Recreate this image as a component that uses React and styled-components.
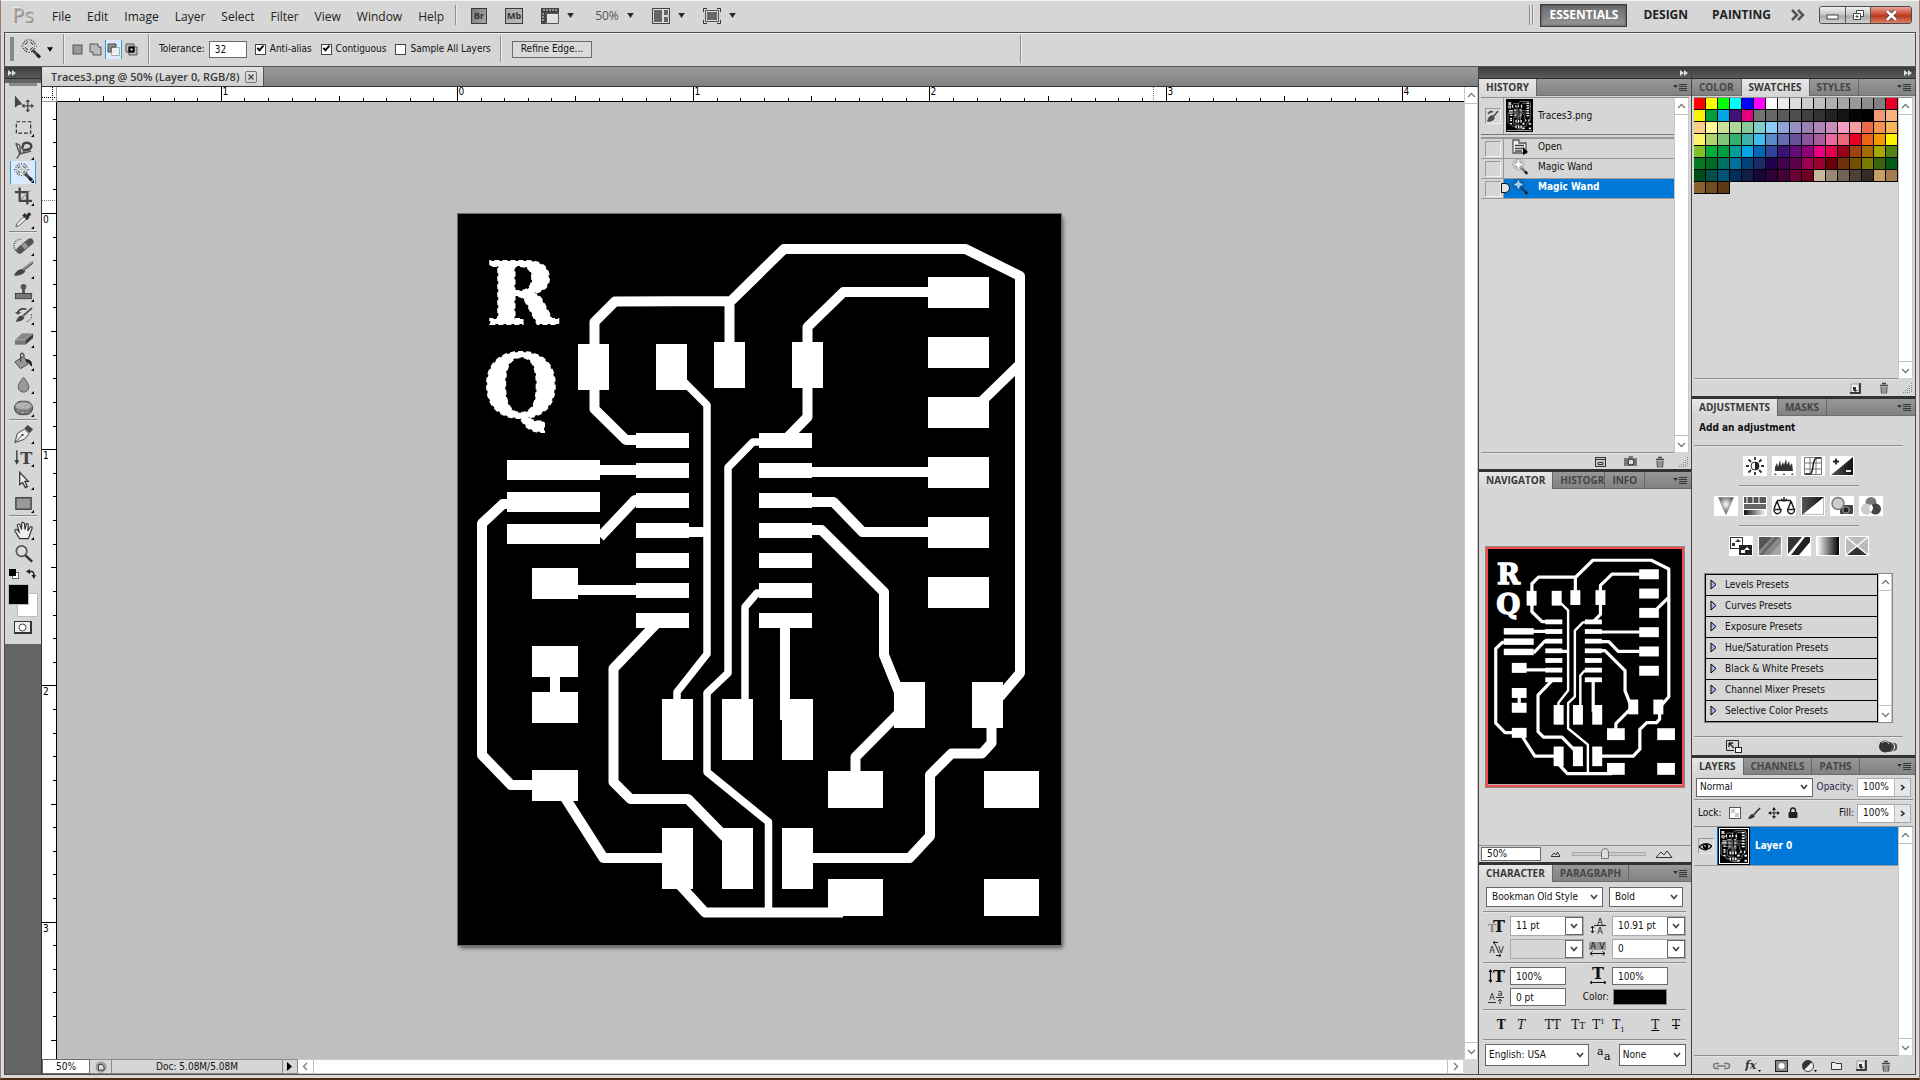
import React, { useEffect, useId, useState } from "react";
import styled, { createGlobalStyle, css } from "styled-components";

const UI = `"DejaVu Sans Condensed", "Open Sans", sans-serif`;
const HEAD = `"Open Sans", "Noto Sans", sans-serif`;
const SERIF = `"DejaVu Serif", "Liberation Serif", serif`;

const Global = createGlobalStyle`
  *, *::before, *::after { box-sizing: border-box; }
  body { margin: 0; background: #4a2a10; }
  button, input, select { font: inherit; color: inherit; margin: 0; padding: 0; border: 0; background: none; border-radius: 0; }
  svg { display: block; flex: none; }
`;

/* ---------- board artwork ---------- */

const ROWS7 = [433, 463, 493, 523, 553, 583, 613];
const PADS = [
  [578, 344, 31, 46], [656, 344, 31, 46], [714, 342, 31, 46], [792, 342, 31, 46],
  ...ROWS7.map((y) => [636, y, 53, 15]),
  ...ROWS7.map((y) => [759, y, 53, 15]),
  [507, 460, 93, 20], [507, 492, 93, 20], [507, 524, 93, 20],
  ...[277, 337, 397, 457, 517, 577].map((y) => [928, y, 61, 31]),
  [532, 568, 46, 31], [532, 646, 46, 31], [532, 692, 46, 31], [532, 770, 46, 31],
  [662, 699, 31, 61], [722, 699, 31, 61], [782, 699, 31, 61],
  [662, 828, 31, 61], [722, 828, 31, 61], [782, 828, 31, 61],
  [894, 682, 31, 46], [972, 682, 31, 46],
  [828, 771, 55, 37], [984, 771, 55, 37], [828, 879, 55, 37], [984, 879, 55, 37],
];
const WIDE = [
  "M594.5 350V322L615 301.500L731 301L784 249H965.500L1020 276V673L992 706",
  "M729.500 300V345", "M594.500 388V409L626 440H640", "M930 292H843.500L807.500 327V417L787 438",
  "M598 470H640", "M510 504H503L482 523.500V755L511 785H535", "M600 537L635 500H640", "M685 532H708",
  "M810 472H930", "M810 502H833.500L862.500 532H930", "M810 530H821.500L884 592V655L899 692",
  "M980 403L1018 366", "M785 620V720", "M656 624L613.500 668.500V782L630.500 799H688L730 842",
  "M576 590H640", "M555 675V694", "M564 796L603.500 858H664", "M679 884L705 912.500H843",
  "M810 858H909.500L930 836V775L951.500 753.500H982L991.500 743V724", "M900 712L855.500 757V775",
];
const NARROW = [
  "M680 378L707 405V654L677 692V703", "M762 442H753L728 467.500V673L707 693V772L768.500 822V910",
  "M762 593H757L745 607V703",
];

function Board({ width, ants, title }) {
  return (
    <svg width={width} viewBox="458 214 603 731" role="img" aria-label={title}>
      <rect x="458" y="214" width="603" height="731" fill="#000" />
      <g fill="#fff">
        {PADS.map(([x, y, w, h], i) => <rect key={i} x={x} y={y} width={w} height={h} />)}
      </g>
      <g fill="none" stroke="#fff" strokeLinejoin="round">
        <path d={WIDE.join("")} strokeWidth="10" />
        <path d={NARROW.join("")} strokeWidth="7.500" />
      </g>
      <g fontFamily={SERIF} fontWeight="700" fontSize="86" fill="#fff" textAnchor="middle"
        stroke="#fff" strokeWidth={ants ? 2 : 4} strokeDasharray={ants ? "5 3" : "none"}>
        <text x="522" y="324">R</text>
        <text x="521" y="416">Q</text>
      </g>
    </svg>
  );
}

/* ---------- icons ---------- */

const Ic = ({ s = 20, w, h, vb, children }) => (
  <svg width={w || s} height={h || s} viewBox={vb || `0 0 ${w || s} ${h || s}`} aria-hidden="true">{children}</svg>
);
const Tri = ({ c = "#2a2a2a", w = 7 }) => <Ic w={w} h={5} vb="0 0 8 6"><path d="M0 0H8L4 6Z" fill={c} /></Ic>;
const Chev = ({ c = "#444" }) => (
  <Ic w={8} h={6}><path d="M1 1L4 4.500L7 1" fill="none" stroke={c} strokeWidth="1.700" /></Ic>
);
const Arrow = ({ dir }) => {
  const d = { up: "M1 6L4.500 2.500L8 6", down: "M1 3L4.500 6.500L8 3", left: "M6 1L2.500 4.500L6 8", right: "M3 1L6.500 4.500L3 8" }[dir];
  return <Ic s={9}><path d={d} fill="none" stroke="#777" strokeWidth="1.300" /></Ic>;
};
const Wand = ({ s = 22, c = "#444", star = "#ccc" }) => (
  <Ic s={s} vb="0 0 22 22">
    <path d="M9 1V15M1 8H17M4 3L14 13M14 3L4 13M6 1.500L12 14.500M12 1.500L6 14.500M2.500 5L15.500 11M15.500 5L2.500 11" stroke={c} strokeWidth="1.100" strokeDasharray="1.500 1" />
    <path d="M9 3L10.500 6.500L14 8L10.500 9.500L9 13L7.500 9.500L4 8L7.500 6.500Z" fill={star} stroke="#fff" strokeWidth=".6" />
    <path d="M12.500 12L19.500 19" stroke={c} strokeWidth="3" /><path d="M17 16.500L20 19.500" stroke="#222" strokeWidth="3" />
  </Ic>
);

const TOOLS = {
  Move: <><path d="M2 1L2 14L5.500 11L10 10.500Z" fill="#444" /><path d="M15.500 7V17M11 12H20" stroke="#444" strokeWidth="1.300" /><path d="M15.500 5L18 8H13ZM15.500 19L13 16H18ZM9 12L12 9.500V14.500ZM22 12L19 9.500V14.500Z" fill="#444" /></>,
  Marquee: <rect x="3.500" y="4.500" width="15" height="12" fill="none" stroke="#333" strokeWidth="1.300" strokeDasharray="4 2" />,
  Lasso: <><path d="M3 3L7 5L8 14L19 11M3 3L7 14L4 19M8 14L13 12" fill="none" stroke="#555" strokeWidth="1.500" /><path d="M9.500 9L11 3.500Q15 1 18.500 4Q20.500 8 16 9.500L10 10.500" fill="none" stroke="#444" strokeWidth="2.600" /></>,
  Wand: null,
  Crop: <><path d="M7 1V15H20M2 6H15V19" fill="none" stroke="#444" strokeWidth="2.400" /><path d="M7 15L18 4" stroke="#666" /></>,
  Eyedropper: <><path d="M3 18L4 15L12 7L14.500 9.500L6.500 17Z" fill="#eee" stroke="#555" /><path d="M11 5L16 10M14 8L18 4" stroke="#333" strokeWidth="3.500" /></>,
  Healing: <><path d="M8 3A6 6 0 1 0 8 17" fill="none" stroke="#222" strokeWidth="1.300" strokeDasharray="1 1.500" /><path d="M7 14.500L18 5.500" stroke="#555" strokeWidth="7" strokeLinecap="round" /><path d="M10.500 11.500L14.500 8.500" stroke="#999" strokeWidth="5.500" /></>,
  Brush: <><path d="M1 17Q4 10 9.500 10L13 12Q11 17 1 17Z" fill="#444" /><path d="M10.500 10.500L21 2.500" stroke="#888" strokeWidth="2.500" /><path d="M11.500 11.500L21 4" stroke="#444" /></>,
  Stamp: <><circle cx="11" cy="4.500" r="3" fill="#555" /><path d="M9.500 6H12.500V12H9.500Z" fill="#555" /><rect x="2.500" y="11.500" width="17" height="5.500" fill="#777" stroke="#444" /></>,
  HistoryBrush: <><path d="M3 17Q5 11 9 10.500L12 12.500Q10 17 3 17Z" fill="#444" /><path d="M10.500 11L20 2.500" stroke="#555" strokeWidth="2" /><path d="M5 7Q8 2 14 4" fill="none" stroke="#333" strokeWidth="1.500" /><path d="M2 7L9 7L5 9.500Z" fill="#333" /><path d="M19 9Q21 15 14 17" fill="none" stroke="#333" strokeDasharray="1.500 1.500" /></>,
  Eraser: <><path d="M2 12L9.500 5H21L13 12Z" fill="#888" /><path d="M2 12H13V17H2Z" fill="#777" /><path d="M13 12L21 5V10L13 17Z" fill="#3c3c3c" /><path d="M2 12H13L21 5" fill="none" stroke="#ccc" strokeWidth=".6" /></>,
  Bucket: <><path d="M2 11L11 5L16 13L8 18Z" fill="#999" stroke="#444" /><path d="M8 11V3Q10 0 12 5" fill="none" stroke="#444" strokeWidth="1.300" /><path d="M13 8Q21 8 20 16L17.500 14Q17 11 14 11Z" fill="#222" /></>,
  Blur: <path d="M11 3Q17 10 16.500 13.500A5.500 5 0 0 1 5.500 13.500Q5 10 11 3Z" fill="#999" stroke="#555" />,
  Sponge: <><rect x="1.500" y="4" width="19" height="14" rx="7" fill="#777" stroke="#444" /><ellipse cx="11" cy="9" rx="9" ry="4.500" fill="#aaa" stroke="#666" strokeDasharray="2 1" /><path d="M6 8H8M11 7H13M9 10H11M14 10H16M5 14H6M9 15.500H11M14 15H15" stroke="#ddd" /></>,
  Pen: <><path d="M2 19L4.500 9.500L12 5L17 9.500L12 15.500Z" fill="#eee" stroke="#444" /><path d="M2 19L10 11" stroke="#444" /><circle cx="10" cy="11" r="1.200" fill="#444" /><path d="M12 4L17.500 9L21 5L15.500 .5Z" fill="#444" /></>,
  Type: <><path d="M4 3V16" stroke="#333" strokeWidth="1.400" /><path d="M1.500 13.500H6.500L4 18Z" fill="#333" /><text x="14" y="17" textAnchor="middle" fontFamily={SERIF} fontWeight="700" fontSize="17" fill="#444">T</text></>,
  PathSelect: <path d="M7 2V15L10 12.500L13 18L15 17L12.500 11.500H16Z" fill="#eee" stroke="#333" strokeWidth="1.300" />,
  Rectangle: <rect x="3" y="4.500" width="16" height="12" fill="#999" stroke="#333" strokeWidth="1.300" />,
  Hand: <path d="M7 19L2 11Q1.500 9 4 9.500L6.500 12L4.500 5Q6 2.500 7.500 5L9 9.500V3Q10 1 12 3L12.500 9.500L14 3.500Q16 2.500 16 5L15.500 11L18 7Q20.500 6 20 8.500L16 19Z" fill="#eee" stroke="#333" strokeWidth="1.200" />,
  Zoom: <><circle cx="9" cy="8" r="5.500" fill="#ddd" stroke="#555" strokeWidth="1.800" /><path d="M13 12.500L20 19" stroke="#333" strokeWidth="2.600" /></>,
};

const MenuGlyph = () => (
  <Ic w={14} h={9}><path d="M0 2H5L2.500 5Z" fill="#333" /><path d="M6 1.500H14M6 3.500H14M6 5.500H14M6 7.500H14" stroke="#333" /></Ic>
);
const Trash = () => (
  <Ic w={10} h={12}><path d="M1 3.500H9M3 1.500H7" stroke="#444" strokeWidth="1.500" /><path d="M2 5L2.500 11H7.500L8 5" fill="none" stroke="#555" strokeWidth="1.200" /><path d="M4 5V10M6 5V10" stroke="#555" /></Ic>
);
const NewIc = () => (
  <Ic w={11} h={11}><path d="M1 1H9V10H1Z" fill="#eee" stroke="#999" /><path d="M10 0V10H0" fill="none" stroke="#111" strokeWidth="1.500" /><path d="M3 4H6V7H8L5 9L3 7Z" fill="#333" /></Ic>
);
const Grip = () => (
  <Ic w={11} h={10}><path d="M9.500 0V10M7.500 3V10M5.500 5V10M3.500 7V10M1.500 9V10" stroke="#888" strokeDasharray="1 1" /></Ic>
);

/* ---------- frame and bars ---------- */

const Shell = styled.div`
  height: 100vh; min-height: 900px; min-width: 1280px;
  display: flex; flex-direction: column;
  border: 1px solid #9b7a66; border-top: 1px solid #f2f2f2; border-bottom: 2px solid #4e2c10;
  background: #dadada; font: 10px/14px ${UI}; color: #111; cursor: default;
`;
const Frame = styled.main`
  flex: 1; min-height: 0; margin: 0 3px 3px; border: 1px solid #4c4c4c;
  display: flex; flex-direction: column; background: #646464;
`;
const MenuBar = styled.header`
  height: 31px; display: flex; align-items: center; padding: 0 7px 3px 10px;
  background: #d6d6d6; font: 12px/18px ${HEAD}; color: #222;
`;
const Logo = styled.span`
  font: 20px/24px ${HEAD}; color: #b2b2b2; text-shadow: 1px 1px 0 #8a8a8a, -1px -1px 0 #e8e8e8; width: 41px; padding-left: 1px;
`;
const MenuList = styled.nav` display: flex; gap: 16px; padding-top: 4px; `;
const FlatButton = styled.button` display: flex; align-items: center; gap: 8px; white-space: nowrap; `;
const ZoomPick = styled(FlatButton)` color: #555; padding-left: 3px; `;
const VRule = styled.i`
  width: 2px; height: ${(p) => p.$h || 20}px; border-left: 1px solid #8e8e8e; border-right: 1px solid #ececec;
  margin: 0 ${(p) => p.$r ?? 10}px 0 ${(p) => p.$l ?? 10}px; flex: none;
`;
const AppIcons = styled.div` display: flex; align-items: center; gap: 18px; padding-top: 1px; `;
const AppBadge = styled.button`
  height: 16px; width: ${(p) => p.$w}px; border: 1px solid #3a3a3a; color: #333; font: 700 9px/14px ${HEAD};
  background: linear-gradient(120deg, ${(p) => p.$from}, ${(p) => p.$to}); text-align: center;
`;
const Workspaces = styled.div` margin-left: auto; display: flex; align-items: center; font-weight: 700; `;
const Workspace = styled.button`
  height: 23px; padding: 0 ${(p) => (p.$on ? 8 : 12)}px;
  ${(p) => p.$on && css`
    border: 1px solid #3c3c3c; color: #fff; background: linear-gradient(#6c6c6c, #979797);
    box-shadow: inset 0 0 3px #444; margin: 0 4px 0 6px;
  `}
`;
const WinButtons = styled.div`
  display: flex; height: 18px; border: 1px solid #4a4a4a; border-radius: 3px; overflow: hidden; margin-left: 6px;
`;
const WinButton = styled.button`
  width: ${(p) => (p.$close ? 41 : 25)}px; display: grid; place-items: center;
  border-left: ${(p) => (p.$first ? 0 : 1)}px solid #555;
  background: ${(p) => (p.$close ? "linear-gradient(#e8a598, #c8432b 50%, #b73820 55%, #dd8063)" : "linear-gradient(#f2f2f2, #c4c4c4 50%, #a9a9a9 55%, #cfcfcf)")};
`;
const OptionsBar = styled.div`
  height: 34px; display: flex; align-items: center; background: #d6d6d6; border-top: 1px solid #eee;
  border-bottom: 1px solid #555; padding: 0 0 2px 5px; flex: none;
`;
const Dots = styled.i`
  ${(p) => (p.$v ? "width: 4px; height: 24px;" : "width: 28px; height: 3px; margin: 4px auto 6px;")}
  flex: none; display: block;
  background: radial-gradient(circle at 1px 1px, #8a8a8a 1px, transparent 1px) 0 0 / 2px 2px;
`;
const ToolPreset = styled.button` display: flex; align-items: center; gap: 5px; margin-left: 6px; `;
const ModeGroup = styled.div` display: flex; align-items: center; gap: 1px; `;
const ModeButton = styled.button`
  width: 17px; height: 19px; display: grid; place-items: center;
  ${(p) => p.$on && "background: #dcebfb; border: solid #2a9fd8; border-width: 0 1px;"}
`;
const Label = styled.label` display: flex; align-items: center; gap: ${(p) => p.$gap || 4}px; white-space: nowrap; color: ${(p) => p.$c || "#111"}; `;
const Field = styled.input`
  width: ${(p) => p.$w}px; height: ${(p) => p.$h || 16}px; background: #fff; border: 1px solid ${(p) => p.$b || "#6c6c6c"};
  padding-left: ${(p) => p.$pad || 5}px; min-width: 0;
`;
const Check = styled.input.attrs({ type: "checkbox" })`
  appearance: none; width: 11px; height: 11px; background: #fff; border: 1px solid #444; display: grid; place-items: center;
  &:checked::before { content: ""; width: 7px; height: 4px; border: solid #111; border-width: 0 0 2px 2px; transform: rotate(-48deg) translate(1px, -1px); }
`;
const Checks = styled.div` display: flex; gap: 9px; margin-left: 8px; `;
const PushButton = styled.button` height: 17px; padding: 0 8px; border: 1px solid #6c6c6c; background: #dadada; `;

const Work = styled.div` flex: 1; min-height: 0; display: flex; `;
const DarkHead = styled.div`
  height: 12px; background: linear-gradient(#3c3c3c, #5a5a5a); border-bottom: 1px solid #2c2c2c; flex: none;
  display: flex; align-items: center; justify-content: ${(p) => (p.$left ? "flex-start" : "flex-end")}; padding: 0 3px;
`;
const Fast = () => <Ic w={8} h={6}><path d="M0 0L4 3L0 6ZM4 0L8 3L4 6Z" fill="#ddd" /></Ic>;

/* ---------- tool dock ---------- */

const ToolDock = styled.aside` width: 37px; flex: none; border-right: 1px solid #333; background: #646464; `;
const ToolBox = styled.div` background: #d6d6d6; padding-bottom: 10px; `;
const Tool = styled.button`
  width: 26px; height: 23px; margin: 0 5px; display: grid; place-items: center; position: relative;
  border: solid transparent; border-width: 0 1px;
  ${(p) => p.$on && "background: #dcebfb; border-color: #2a9fd8;"}
  ${(p) => p.$more && `&::after { content: ""; position: absolute; right: 1px; bottom: 1px; border: solid #000; border-width: 0 0 3px 3px; border-left-color: transparent; }`}
`;
const ToolRule = styled.hr` height: 2px; margin: 1px 4px; border: solid; border-width: 1px 0; border-color: #888 transparent #e8e8e8; `;
const MiniRow = styled.div` display: flex; justify-content: space-between; padding: 5px 5px 0 4px; height: 20px; `;
const Inks = styled.div` display: grid; grid-template-columns: repeat(10, 3px); grid-template-rows: repeat(11, 3px); margin: 0 3px 3px; `;
const Ink = styled.button`
  grid-area: ${(p) => (p.$back ? "4 / 4 / 12 / 11" : "1 / 1 / 8 / 8")}; z-index: ${(p) => (p.$back ? 0 : 1)};
  background: ${(p) => (p.$back ? "#fff" : "#000")}; border: 1px solid #fff; outline: 1px solid #bbb; outline-offset: -1px;
`;
const MaskButton = styled.button`
  display: grid; place-items: center; width: 18px; height: 13px; margin: 4px auto 0 9px; background: #eee; border: solid #333; border-width: 1px 2px 2px 1px;
`;

const NO_MORE = ["Move", "Zoom"];
function ToolGroup({ names }) {
  return names.map((n) => (
    <Tool key={n} $on={n === "Wand"} $more={!NO_MORE.includes(n)} aria-label={n}>
      {n === "Wand" ? <Wand s={21} /> : <Ic w={21} h={20} vb="0 0 22 20">{TOOLS[n]}</Ic>}
    </Tool>
  ));
}

/* ---------- document ---------- */

const Doc = styled.section`
  flex: 1; min-width: 0; display: grid;
  grid-template: 20px 15px minmax(0, 1fr) 15px / 15px minmax(0, 1fr) 14px;
`;
const DocTabs = styled.div`
  grid-column: 1 / -1; display: flex; background: linear-gradient(#9b9b9b, #808080); border-bottom: 1px solid #333;
`;
const DocTab = styled.div`
  display: flex; align-items: center; gap: 6px; padding: 0 6px 0 9px; background: linear-gradient(#e2e2e2, #cfcfcf);
  border-right: 1px solid #555; font: 600 11px/18px ${HEAD}; color: #3a3a3a; white-space: nowrap;
`;
const CloseTab = styled.button` width: 12px; height: 12px; display: grid; place-items: center; border: 1px solid #777; border-radius: 2px; `;
const RulerX = styled.div` background: #fff; overflow: hidden; border-bottom: 1px solid #000; `;
const RulerY = styled.div` background: #fff; overflow: hidden; border-right: 1px solid #000; `;
const Corner = styled.div` background: #fff; border-right: 1px solid #999; border-bottom: 1px solid #999; `;
const Pasteboard = styled.div`
  background: #bfbfbf; display: flex; align-items: center; justify-content: center; overflow: hidden; padding: 0 2px 2px 0;
`;
const Artboard = styled.div` box-shadow: 0 0 0 1px #6e6e6e, 2px 3px 4px #555; `;
const Scroll = styled.div`
  display: flex; flex-direction: ${(p) => (p.$x ? "row" : "column")}; justify-content: space-between;
  background: #fff; flex: ${(p) => (p.$x ? 1 : "none")}; ${(p) => !p.$x && `width: ${p.$w || 14}px;`}
  ${(p) => p.$span && "grid-row: 2 / 4; grid-column: 3;"}
  border: solid #c8c8c8; border-width: ${(p) => (p.$x ? "1px 0" : "0 1px")};
`;
const ScrollBtn = styled.button`
  ${(p) => (p.$x ? "width: 16px;" : "height: 17px;")} display: grid; place-items: center; flex: none;
  border: 0 solid #c0c0c0; border-${(p) => p.$edge}-width: 1px;
`;
const Status = styled.footer` grid-column: 1 / -1; display: flex; background: #d6d6d6; `;
const StatusCell = styled.div`
  width: ${(p) => p.$w}px; display: flex; align-items: center; justify-content: center;
  border: solid #8a8a8a; border-width: 1px 1px 1px 0; white-space: nowrap; flex: none;
`;
const StatusGap = styled.div` width: 15px; `;

function ScrollV({ span, w }) {
  return (
    <Scroll $span={span} $w={w}>
      <ScrollBtn $edge="bottom" aria-label="Scroll up"><Arrow dir="up" /></ScrollBtn>
      <ScrollBtn $edge="top" aria-label="Scroll down"><Arrow dir="down" /></ScrollBtn>
    </Scroll>
  );
}

const INCH = 236.2;
const CHROME_X = 514;
const CHROME_Y = 124;

function useViewport() {
  const read = () => [window.innerWidth, window.innerHeight];
  const [size, setSize] = useState(read);
  useEffect(() => {
    const on = () => setSize(read());
    window.addEventListener("resize", on);
    return () => window.removeEventListener("resize", on);
  }, []);
  return size;
}

function ticks(origin, length) {
  const out = [];
  for (let k = -Math.floor((origin * 10) / INCH); ; k++) {
    const at = Math.round(origin + (k * INCH) / 10) - 0.5;
    if (at > length) return out;
    out.push({ k, at, big: k % 10 === 0, from: k % 10 === 0 ? 0 : k % 5 === 0 ? 9 : 11 });
  }
}
function HRuler({ length }) {
  return (
    <Ic w={length} h={14}>
      {ticks(401, length).map(({ k, at, big, from }) => (
        <g key={k}>
          <path d={`M${at} ${from}V14`} stroke="#000" />
          {big && <text x={at + 1} y="8" fontSize="10">{Math.abs(k / 10)}</text>}
        </g>
      ))}
      <path d="M1096.500 0V14" stroke="#777" strokeDasharray="1 1" />
    </Ic>
  );
}
function VRuler({ length }) {
  return (
    <Ic w={14} h={length}>
      {ticks(112, length).map(({ k, at, big, from }) => (
        <g key={k}>
          <path d={`M${from} ${at}H14`} stroke="#000" />
          {big && <text x="1" y={at + 9} fontSize="10">{Math.abs(k / 10)}</text>}
        </g>
      ))}
      <path d="M0 98.500H14" stroke="#777" strokeDasharray="1 1" />
    </Ic>
  );
}

/* ---------- panels ---------- */

const Dock = styled.aside`
  width: ${(p) => p.$w}px; flex: none; border-left: 1px solid #444; display: flex; flex-direction: column;
`;
const PanelBox = styled.section`
  flex: ${(p) => p.$flex || "none"}; min-height: 0; display: flex; flex-direction: column; background: #d6d6d6;
  border-bottom: ${(p) => (p.$last ? 0 : 3)}px solid #323232; overflow: hidden;
`;
const Tabs = styled.div`
  height: 17px; flex: none; display: flex; background: linear-gradient(#989898, #828282);
  font: 700 10px/15px ${HEAD}; border-bottom: 1px solid #6e6e6e;
`;
const TabBtn = styled.button`
  padding: 0 ${(p) => (p.$tight ? 0 : 7)}px 1px 7px; height: 17px; border-right: 1px solid #666; color: ${(p) => (p.$on ? "#383838" : "#454545")};
  ${(p) => p.$on && "background: linear-gradient(#e6e6e6, #d6d6d6);"}
  white-space: nowrap;
`;
const PanelMenu = styled.button` margin-left: auto; padding: 0 4px; `;
function Panel({ tabs, on, tight, flex, last, children }) {
  return (
    <PanelBox $flex={flex} $last={last}>
      <Tabs>
        {tabs.map((t) => <TabBtn key={t} $on={t === on} $tight={t === tight}>{t}</TabBtn>)}
        <PanelMenu aria-label="Panel menu"><MenuGlyph /></PanelMenu>
      </Tabs>
      {children}
    </PanelBox>
  );
}
const Line = styled.hr`
  height: 2px; border: solid; border-width: 1px 0; border-color: #8e8e8e transparent #e4e4e4; flex: none;
  margin: ${(p) => p.$m || "0"}; ${(p) => p.$w && `width: ${p.$w}px;`}
`;
const Body = styled.div` flex: 1; min-height: 0; display: flex; margin: 1px 2px 0; border-top: 1px solid #8e8e8e; `;
const Col = styled.div` flex: 1; min-width: 0; display: flex; flex-direction: column; `;
const Foot = styled.div`
  height: ${(p) => p.$h || 17}px; flex: none; display: flex; align-items: center; justify-content: flex-end; gap: ${(p) => p.$gap}px;
  padding-right: ${(p) => p.$r ?? 0}px;
`;
const IconSet = styled.div` display: flex; align-items: center; gap: 18px; `;

const HistoryRow = styled.div`
  height: ${(p) => (p.$tall ? 37 : 20)}px; display: flex; flex: none; border-bottom: 1px solid ${(p) => (p.$tall ? "#777" : "#999")};
  margin-bottom: ${(p) => (p.$tall ? 4 : 0)}px; box-shadow: ${(p) => (p.$tall ? "0 2px 0 #d6d6d6, 0 4px 0 #999" : "none")};
`;
const Well = styled.span`
  width: 23px; padding-left: 4px; border-right: 1px solid #999; display: flex; align-items: center; flex: none;
`;
const WellBox = styled.span`
  width: 16px; height: 16px; border: 1px solid; border-color: #999 #eee #eee #999; display: grid; place-items: center;
`;
const State = styled.button`
  flex: 1; display: flex; align-items: center; gap: ${(p) => (p.$tall ? 4 : 9)}px; padding: 0 0 ${(p) => (p.$tall ? "1px 1px" : "3px 7px")}; position: relative;
  ${(p) => p.$on && "background: #0078d7; color: #fff; font-weight: 700;"}
`;
const Pointer = styled.i`
  position: absolute; left: -3px; top: 4px; width: 9px; height: 10px; background: #e6e6e6; border: 1px solid #111; border-radius: 1px 6px 6px 1px;
`;

const Swatches = styled.div` display: grid; grid-template-columns: repeat(17, 12px); grid-auto-rows: 12px; `;
const Swatch = styled.button` background: ${(p) => p.$c}; border: solid #000; border-width: 0 1px 1px 0; `;

const NavView = styled.div` flex: 1; display: grid; place-items: center; min-height: 0; `;
const NavFrame = styled.div` border: 2px solid #f8494b; outline: 1px solid #888; `;
const NavFoot = styled.div` display: flex; align-items: center; padding: 0 17px 0 2px; gap: 10px; height: 17px; flex: none; border-top: 1px solid #8e8e8e; `;
const Range = styled.input.attrs({ type: "range" })`
  appearance: none; width: 74px; height: 12px; margin-left: 2px;
  &::-webkit-slider-runnable-track { height: 4px; border: 1px solid #aaa; background: #ccc; }
  &::-webkit-slider-thumb { appearance: none; width: 8px; height: 11px; margin-top: -5px; background: #ddd; border: 1px solid #777; border-radius: 4px 4px 0 0; }
`;

const SelectBox = styled.span`
  display: inline-grid; width: ${(p) => p.$w}px; height: ${(p) => p.$h || 20}px; background: #fff; border: 1px solid #666; align-items: center;
  > select { grid-area: 1 / 1; appearance: none; width: 100%; height: 100%; padding-left: ${(p) => p.$pad || 5}px; outline: none; }
  > svg { grid-area: 1 / 1; justify-self: end; margin-right: 4px; pointer-events: none; }
`;
const Pick = ({ w, h, pad, label, value }) => (
  <SelectBox $w={w} $h={h} $pad={pad}><select aria-label={label} defaultValue={value}><option>{value}</option></select><Chev /></SelectBox>
);
const ComboBox = styled.span`
  display: flex; width: ${(p) => p.$w}px; height: ${(p) => p.$h || 20}px; border: 1px solid #a8a8b0; background: ${(p) => (p.$off ? "#d6d6d6" : "#fff")};
  > input { flex: 1; min-width: 0; padding-left: 5px; }
  > button { width: ${(p) => (p.$thin ? 16 : 18)}px; display: grid; place-items: center; background: ${(p) => (p.$thin ? "#e6e6e6" : "#fff")};
    border: 1px solid ${(p) => (p.$thin ? "#bbb" : "#666")}; border-width: ${(p) => (p.$thin ? "0 0 0 1px" : "1px")}; }
`;
const Combo = ({ w, off, value, label }) => (
  <ComboBox $w={w} $off={off}><input aria-label={label} defaultValue={value} /><button aria-label={`${label} list`}><Chev /></button></ComboBox>
);
const Stepper = ({ id, value }) => (
  <ComboBox $w={54} $h={19} $thin><input id={id} defaultValue={value} /><button aria-label="Open slider"><Ic w={6} h={7}><path d="M1 1L4 3.500L1 6" fill="none" stroke="#222" strokeWidth="1.500" /></Ic></button></ComboBox>
);

const CharBody = styled.div` padding: 5px 5px 8px 4px; display: flex; flex-direction: column; flex: 1; `;
const CharRow = styled.div` display: flex; gap: ${(p) => p.$gap || 6}px; padding-left: ${(p) => p.$l ?? 3}px; align-items: center; height: ${(p) => p.$h || 20}px; `;
const CharGrid = styled.div`
  display: grid; grid-template-columns: 27px 74px 28px 74px; row-gap: 3px; align-items: center;
  > svg { justify-self: center; }
`;
const InkChip = styled.button` width: 54px; height: 16px; background: #000; border: 1px solid #888; margin-left: 1px; `;
const ColorLabel = styled.span` justify-self: end; white-space: nowrap; padding-right: 3px; `;
const StyleRow = styled.div` display: flex; align-items: center; height: 28px; padding-left: 8px; font: 12px/18px ${SERIF}; `;
const StyleBtn = styled.button`
  width: ${(p) => p.$w || 21}px; text-align: center; ${(p) => p.$s}
  > small { font-size: 9px; } > sup, > sub { font-size: 7px; line-height: 0; }
`;

const AdjTitle = styled.h2` font: 700 10px/14px ${UI}; margin: 5px 0 10px 5px; `;
const AdjLine = styled.div` display: flex; justify-content: center; gap: 5px; padding-top: 9px; `;
const AdjButton = styled.button` width: 24px; height: 20px; background: #fff; display: grid; place-items: center; `;
const AdjWrap = styled.div` display: flex; flex-direction: column; padding: 0 12px 0 2px; `;
const Presets = styled.div` display: flex; margin: 17px 0 13px 10px; width: 189px; border: 1px solid #888; `;
const PresetList = styled.ul` list-style: none; margin: 0; padding: 0; flex: 1; border: solid #000; border-width: 1px 1px 0; `;
const Preset = styled.li` height: 21px; border-bottom: 1px solid #000; display: flex; align-items: center; gap: 8px; padding-left: 4px; `;
const AdjFoot = styled.div` display: flex; justify-content: space-between; align-items: center; height: 17px; padding: 0 4px 0 32px; `;

const LayerOpts = styled.div` display: flex; align-items: center; justify-content: space-between; height: ${(p) => p.$h}px; padding: 0 4px; `;
const LockSet = styled.div` display: flex; align-items: center; gap: 7px; padding-left: 2px; `;
const LayerRow = styled.div` height: 39px; display: flex; border-bottom: 1px solid #999; `;
const EyeCell = styled.div` width: 23px; display: grid; place-items: center; `;
const LayerName = styled.button`
  flex: 1; display: flex; align-items: center; gap: 5px; background: #0078d7; color: #fff; font-weight: 700; padding-left: 1px;
`;
const Thumb = styled.span` border: 1px solid ${(p) => (p.$sel ? "#fff" : "#000")}; outline: ${(p) => (p.$sel ? "1px solid #000" : "none")}; margin: 1px; `;

const SW = `ff0000 ffff00 00ff00 00ffff 0000ff ff00ff ffffff ebebeb dcdcdc cdcdcd bebebe b0b0b0 a6a6a6 999999 8c8c8c 808080 e60026
f9f200 009e3d 00a5ea 3f1179 e4007f 737373 666666 595959 4d4d4d 404040 333333 222222 141414 050505 000000 f29b76 f6b37f
facd89 fff799 cce198 acd598 89c997 84ccc9 8bcdf4 8fa6d5 9690c5 9b80b8 af86b8 c78fb9 f49ec1 f49e9e eb6a48 f19450 f8b756
fff467 acd56a 80c77a 32b16c 3cb4ae 3fbbef 5a8ac6 656cb0 674f9b 8a559c ab5b9c ea689f eb6876 e60026 ea6519 f29a00 fcf300
7fc126 00ae3c 009e40 009f9b 00a5ea 0068b6 30439a 3c127a 650b78 910078 e4007f e4004f 99001a a0410f a56b00 a9a700 508414
007a1f 006b24 006f62 0070a0 00427a 1c2a66 220050 440050 5c004c 9c004e 99002e 6a0006 722e0a 755000 7b7b00 3a6410 005a18
004d1a 004f48 005276 003059 111e46 18053a 2c0038 430037 6e0038 6e0022 c9b79c 998875 736357 4f4039 362a28 c69f65 a67b4d
8b6131 734d22 5c3817`.split(/\s+/);

const Grad = ({ id, from, to }) => (
  <linearGradient id={id}><stop offset="0" stopColor={from} /><stop offset="1" stopColor={to} /></linearGradient>
);
const ADJ = [
  [
    ["Brightness", <><path d="M12 1V4M12 16V19M3 10H6M18 10H21M5.500 3.500L8 6M16 14L18.500 16.500M18.500 3.500L16 6M5.500 16.500L8 14" stroke="#333" strokeWidth="1.800" /><circle cx="12" cy="10" r="4" fill="#fff" stroke="#333" /><path d="M12 6A4 4 0 0 1 12 14Z" fill="#222" /></>],
    ["Levels", <><path d="M3 15V11L5 7L6 11L8 4L9 10L11 6L12 9L14 3L15 9L17 5L18 10L20 7L21 15Z" fill="#333" /><path d="M3 17L5 19H2ZM12 17L13.500 19H10.500ZM20 17L22 19H19Z" fill="#555" /></>],
    ["Curves", <><path d="M3.500 1.500H20.500V18.500H3.500ZM3.500 7H20.500M3.500 13H20.500M9 1.500V18.500M15 1.500V18.500" fill="none" stroke="#777" /><path d="M4 18H9Q11 18 12 10Q13 2 16 2H20" fill="none" stroke="#222" strokeWidth="1.600" /></>],
    ["Exposure", <><path d="M1 19L23 1V19Z" fill="url(#gDark)" /><path d="M3 5.500H9M6 2.500V8.500" stroke="#222" strokeWidth="1.800" /><path d="M16 15H21" stroke="#fff" strokeWidth="1.800" /></>],
  ],
  [
    ["Vibrance", <path d="M4.500 1.500H19.500L12 18.500Z" fill="url(#gMid)" stroke="#888" strokeWidth=".7" />],
    ["Hue", <><rect x="1" y="1" width="22" height="6" fill="#555" /><path d="M4 1V7M10 1V7M16 1V7" stroke="#aaa" strokeWidth="2" /><rect x="1" y="8" width="22" height="5" fill="#666" /><rect x="1" y="14" width="22" height="5" fill="url(#gBW)" /></>],
    ["Balance", <path d="M12 1V4M5 4.500H19M9 3L12 5L15 3M5 5L2 13M5 5L8 13M19 5L16 13M19 5L22 13M1.500 13.500H9A3.500 4 0 0 1 2 14M15 13.500H22.500A3.500 4 0 0 1 15.500 14" fill="none" stroke="#222" strokeWidth="1.500" />],
    ["Black and White", <><rect x="1.500" y="1.500" width="21" height="17" fill="#fff" stroke="#bbb" /><path d="M1 19V1H23Z" fill="url(#gDark)" /></>],
    ["Photo Filter", <><rect x="10" y="9" width="13" height="9" rx="1" fill="#444" /><circle cx="16" cy="14" r="3.200" fill="#222" stroke="#aaa" /><circle cx="8" cy="7.500" r="6" fill="#ccc" stroke="#777" strokeWidth="1.500" /></>],
    ["Channel Mixer", <><circle cx="12" cy="6.500" r="5.500" fill="#777" /><circle cx="16.500" cy="13" r="5.500" fill="#444" /><circle cx="7.500" cy="13" r="5.500" fill="#ccc" /><path d="M12 8Q16 12 12 16Q9 12 12 8Z" fill="#fff" /></>],
  ],
  [
    ["Invert", <><rect x="1.500" y="1.500" width="12" height="11" fill="#fff" stroke="#333" /><path d="M3 7H6V10H3ZM9 3L12 6H6Z" fill="#333" /><rect x="10" y="9" width="13" height="10" fill="#222" /><path d="M12 14H16V17H12ZM18 11L21 14H15Z" fill="#fff" /></>],
    ["Posterize", <><rect x="1" y="1" width="22" height="18" fill="#888" /><path d="M1 1H14L1 15Z" fill="#555" /><path d="M1 19L17 1H21L5 19Z" fill="#666" /><path d="M12 19L23 7V19Z" fill="#a5a5a5" /></>],
    ["Threshold", <><path d="M1 1H15L1 18Z" fill="#333" /><path d="M4 19L18 1H23V6L12 19Z" fill="#222" /></>],
    ["Gradient Map", <rect x="1" y="1" width="22" height="18" fill="url(#gWB)" />],
    ["Selective Color", <><rect x="1" y="1" width="22" height="18" fill="#bbb" /><path d="M1 19L12 10L23 19Z" fill="#333" /><path d="M1 1L23 19M23 1L1 19" stroke="#fff" strokeWidth="1.500" /></>],
  ],
];
const PRESETS = ["Levels", "Curves", "Exposure", "Hue/Saturation", "Black & White", "Channel Mixer", "Selective Color"];

const TIcon = ({ kind }) => {
  const t = (x, y, s, c, ch, b) => <text x={x} y={y} fontSize={s} fill={c} fontFamily={b ? SERIF : UI} fontWeight={b ? 700 : 400} textAnchor="middle">{ch}</text>;
  const m = {
    size: <>{t(4, 15, 11, "#888", "T", 1)}{t(11, 15, 16, "#111", "T", 1)}</>,
    lead: <>{t(11, 8, 9, "#111", "A")}{t(11, 17, 9, "#111", "A")}<path d="M5 8.500H17M3.500 9V16M2 11L3.500 9L5 11M2 14L3.500 16L5 14" fill="none" stroke="#222" /></>,
    kern: <>{t(4, 13, 9, "#222", "A")}{t(13, 13, 9, "#222", "V")}<path d="M7 4L11 13M5 2.500H10M7 1L5 2.500L7 4M8 15.500H13M11 14L13 15.500L11 17" fill="none" stroke="#222" /></>,
    track: <><rect x="0" y="2" width="17" height="8" fill="#999" />{t(4, 9, 9, "#111", "A")}{t(13, 9, 9, "#111", "V")}<path d="M1 13.500H16M3.500 11.500L1 13.500L3.500 15.500M13.500 11.500L16 13.500L13.500 15.500" fill="none" stroke="#111" /></>,
    vs: <>{t(11, 15, 16, "#111", "T", 1)}<path d="M2.500 3V15M1 5L2.500 3L4 5M1 13L2.500 15L4 13" fill="none" stroke="#111" strokeWidth="1.200" /></>,
    hs: <>{t(9, 12, 16, "#111", "T", 1)}<path d="M1 15.500H17M3 14L1 15.500L3 17M15 14L17 15.500L15 17" fill="none" stroke="#111" /></>,
    base: <>{t(4, 12, 9, "#222", "A")}{t(12, 8, 9, "#222", "a")}<path d="M0 14.500H8M8 9.500H16M12 16V11M10 13L12 11L14 13" fill="none" stroke="#333" /></>,
  };
  return <Ic w={18} h={18}>{m[kind]}</Ic>;
};

export default function App() {
  const uid = useId();
  const [vw, vh] = useViewport();
  const menus = ["File", "Edit", "Image", "Layer", "Select", "Filter", "View", "Window", "Help"];
  return (
    <>
      <Global />
      <Shell>
        <MenuBar>
          <Logo>Ps</Logo>
          <MenuList>{menus.map((m) => <FlatButton key={m}>{m}</FlatButton>)}</MenuList>
          <VRule $l={11} $r={14} />
          <AppIcons>
            <AppBadge $w={16} $from="#777" $to="#aaa">Br</AppBadge>
            <AppBadge $w={18} $from="#aaa" $to="#bbb">Mb</AppBadge>
            <FlatButton aria-label="View extras"><Ic w={18} h={16}><path d="M0 0H18V5H5V16H0Z" fill="#444" /><path d="M5.500 5.500H17.500V15.500H5.500Z" fill="#e2e2e2" stroke="#555" /><path d="M3 1V3M6 1V3M9 1V3M12 1V3M15 1V3M1 6H3M1 9H3M1 12H3" stroke="#ddd" /></Ic><Tri /></FlatButton>
            <ZoomPick>50%<Tri /></ZoomPick>
            <FlatButton aria-label="Arrange documents"><Ic w={18} h={16}><rect x=".5" y=".5" width="17" height="15" fill="#ddd" stroke="#444" /><path d="M2 2H10V14H2ZM12 2H16V7H12ZM12 9H16V14H12Z" fill="#666" /></Ic><Tri /></FlatButton>
            <FlatButton aria-label="Screen mode"><Ic w={18} h={16}><path d="M.5 4V.5H4M14 .5H17.500V4M17.500 12V15.500H14M4 15.500H.5V12" fill="none" stroke="#333" /><rect x="2.500" y="2.500" width="13" height="11" fill="#ddd" stroke="#555" /><rect x="4" y="4" width="10" height="8" fill="#666" /></Ic><Tri /></FlatButton>
          </AppIcons>
          <Workspaces>
            <VRule $l={0} $r={0} /><VRule $l={1} $r={0} />
            <Workspace $on>ESSENTIALS</Workspace>
            <Workspace>DESIGN</Workspace>
            <Workspace>PAINTING</Workspace>
            <FlatButton aria-label="More workspaces"><Ic w={30} h={12}><path d="M9 1L14 6L9 11M15 1L20 6L15 11" fill="none" stroke="#555" strokeWidth="2.500" /></Ic></FlatButton>
            <WinButtons>
              <WinButton $first aria-label="Minimize"><Ic w={13} h={12}><rect x="1" y="6" width="11" height="4" fill="#fff" stroke="#444" /></Ic></WinButton>
              <WinButton aria-label="Restore"><Ic w={13} h={12}><path d="M4.500 1.500H11.500V7.500H4.500Z" fill="#fff" stroke="#444" /><path d="M1.500 4.500H8.500V10.500H1.500Z" fill="#fff" stroke="#444" /><path d="M4 7H6V8H4Z" fill="#888" stroke="#444" /></Ic></WinButton>
              <WinButton $close aria-label="Close"><Ic w={13} h={11}><path d="M2 1L11 10M11 1L2 10" stroke="#533" strokeWidth="4.500" /><path d="M2 1L11 10M11 1L2 10" stroke="#fff" strokeWidth="2.800" /></Ic></WinButton>
            </WinButtons>
          </Workspaces>
        </MenuBar>

        <Frame>
          <OptionsBar>
            <Dots $v />
            <ToolPreset aria-label="Tool presets"><Wand s={22} /><Tri c="#000" w={6} /></ToolPreset>
            <VRule $h={30} $l={10} $r={4} />
            <ModeGroup>
              <ModeButton aria-label="New selection"><Ic s={11}><rect x="1" y="1" width="9" height="9" fill="#999" stroke="#555" /></Ic></ModeButton>
              <ModeButton aria-label="Add to selection"><Ic s={13}><path d="M1 1H9V4H12V12H4V9H1Z" fill="#bbb" stroke="#555" /></Ic></ModeButton>
              <ModeButton $on aria-label="Subtract from selection"><Ic s={13}><path d="M4.500 12.500H12.500V4.500H4.500Z" fill="#eee" stroke="#aaa" /><path d="M1 1H9V4H4V9H1Z" fill="#999" stroke="#444" /></Ic></ModeButton>
              <ModeButton aria-label="Intersect selection"><Ic s={13}><path d="M1 1H9V9H1ZM4 4H12V12H4Z" fill="#bbb" stroke="#555" /><path d="M4.500 4.500H8.500V8.500H4.500Z" fill="#fff" stroke="#000" strokeWidth="2" /></Ic></ModeButton>
            </ModeGroup>
            <VRule $h={30} $l={8} $r={9} />
            <Label>Tolerance: <Field $w={38} $h={17} defaultValue="32" /></Label>
            <Checks>
              <Label><Check defaultChecked />Anti-alias</Label>
              <Label><Check defaultChecked />Contiguous</Label>
              <Label><Check />Sample All Layers</Label>
            </Checks>
            <VRule $h={26} $l={9} $r={10} />
            <PushButton>Refine Edge...</PushButton>
            <VRule $h={28} $l={428} />
          </OptionsBar>

          <Work>
            <ToolDock>
              <DarkHead $left><Fast /></DarkHead>
              <ToolBox>
                <Dots />
                <ToolGroup names={["Move", "Marquee", "Lasso", "Wand", "Crop", "Eyedropper"]} />
                <ToolRule />
                <ToolGroup names={["Healing", "Brush", "Stamp", "HistoryBrush", "Eraser", "Bucket", "Blur", "Sponge"]} />
                <ToolRule />
                <ToolGroup names={["Pen", "Type", "PathSelect", "Rectangle"]} />
                <ToolRule />
                <ToolGroup names={["Hand", "Zoom"]} />
                <MiniRow>
                  <Ic w={10} h={10}><rect x="3.500" y="3.500" width="6" height="6" fill="#fff" stroke="#666" /><rect width="7" height="7" fill="#000" /></Ic>
                  <Ic w={10} h={10}><path d="M2 2.500H6Q8 3 8 7" fill="none" stroke="#222" strokeWidth="1.500" /><path d="M0 2.500L4 0V5ZM8 10L5.500 6H10Z" fill="#222" /></Ic>
                </MiniRow>
                <Inks><Ink aria-label="Foreground color" /><Ink $back aria-label="Background color" /></Inks>
                <MaskButton aria-label="Quick mask"><Ic s={9}><circle cx="4.500" cy="4.500" r="3.500" fill="#fff" stroke="#444" /></Ic></MaskButton>
              </ToolBox>
            </ToolDock>

            <Doc>
              <DocTabs>
                <DocTab>Traces3.png @ 50% (Layer 0, RGB/8)
                  <CloseTab aria-label="Close document"><Ic s={8}><path d="M1.500 1.500L6.500 6.500M6.500 1.500L1.500 6.500" stroke="#444" strokeWidth="1.300" /></Ic></CloseTab>
                </DocTab>
              </DocTabs>
              <Corner><Ic s={14}><path d="M10.500 0V14M0 10.500H14" stroke="#000" strokeDasharray="1 1" /></Ic></Corner>
              <RulerX><HRuler length={vw - CHROME_X} /></RulerX>
              <ScrollV span />
              <RulerY><VRuler length={vh - CHROME_Y} /></RulerY>
              <Pasteboard><Artboard><Board width={603} ants title="Circuit board traces" /></Artboard></Pasteboard>
              <Status>
                <Field $w={48} $h={15} $pad={13} aria-label="Zoom level" defaultValue="50%" />
                <StatusCell $w={22}><Ic s={12}><circle cx="6" cy="6" r="5.500" fill="#999" /><path d="M3.500 3.500H7L9 6V9H3.500Z" fill="#ddd" stroke="#444" /></Ic></StatusCell>
                <StatusCell $w={171}>Doc: 5.08M/5.08M</StatusCell>
                <StatusCell $w={15}><Ic w={6} h={9}><path d="M0 0L5 4.500L0 9Z" /></Ic></StatusCell>
                <Scroll $x>
                  <ScrollBtn $x $edge="right" aria-label="Scroll left"><Arrow dir="left" /></ScrollBtn>
                  <ScrollBtn $x $edge="left" aria-label="Scroll right"><Arrow dir="right" /></ScrollBtn>
                </Scroll>
                <StatusGap />
              </Status>
            </Doc>

            <Dock $w={213}>
              <DarkHead><Fast /></DarkHead>
              <Panel tabs={["HISTORY"]} on="HISTORY" flex="1 1 0">
                <Body>
                  <Col>
                    <HistoryRow $tall>
                      <Well><WellBox><Ic s={14}><path d="M2 12Q3 7 7 7L8 9Q7 12 2 12ZM7 8L12 2M2 5Q4 1 7 3" fill="#555" stroke="#444" strokeWidth="1.300" /></Ic></WellBox></Well>
                      <State $tall><Thumb><Board width={25} title="Snapshot" /></Thumb>Traces3.png</State>
                    </HistoryRow>
                    <HistoryRow>
                      <Well><WellBox /></Well>
                      <State><Ic w={18} h={18}><path d="M2 2H8V5H15V15H2Z" fill="#eee" stroke="#555" strokeWidth="1.300" /><path d="M4 7.500H13M4 10.500H13M4 13H11" stroke="#444" strokeWidth="1.300" /><path d="M12 9V17L17 14Z" fill="#000" /></Ic>Open</State>
                    </HistoryRow>
                    <HistoryRow>
                      <Well><WellBox /></Well>
                      <State><Wand s={18} c="#777" star="#fff" />Magic Wand</State>
                    </HistoryRow>
                    <HistoryRow>
                      <Well><WellBox /></Well>
                      <State $on><Pointer /><Wand s={18} c="#1c3f63" star="#9ccbf2" />Magic Wand</State>
                    </HistoryRow>
                  </Col>
                  <ScrollV w={15} />
                </Body>
                <Line $m="0 17px 0 2px" />
                <Foot $gap={13} $h={15} $r={2}>
                  <IconSet>
                    <Ic w={11} h={10}><rect x=".5" y=".5" width="10" height="9" fill="#ccc" stroke="#333" /><path d="M0 2.500H11M3 5.500H8V7.500H3Z" fill="none" stroke="#333" /></Ic>
                    <Ic w={13} h={11}><path d="M0 2H4L5 0H9V2H13V10H0Z" fill="#777" /><circle cx="7" cy="6" r="3" fill="#ddd" stroke="#222" /></Ic>
                    <Trash />
                  </IconSet>
                  <Grip />
                </Foot>
              </Panel>

              <Panel tabs={["NAVIGATOR", "HISTOGR", "INFO"]} on="NAVIGATOR" tight="HISTOGR" flex="1 1 0">
                <NavView><NavFrame><Board width={194} title="Navigator preview" /></NavFrame></NavView>
                <NavFoot>
                  <Field $w={60} $h={14} aria-label="Navigator zoom" defaultValue="50%" />
                  <Ic w={9} h={6}><path d="M0 5.500L3 2L5 4L6.500 1L9 5.500Z" fill="#ddd" stroke="#333" /></Ic>
                  <Range aria-label="Zoom" defaultValue="43" />
                  <Ic w={17} h={8}><path d="M0 7.500L5 2L8 5L11 1L16 7.500Z" fill="#ddd" stroke="#333" /></Ic>
                </NavFoot>
              </Panel>

              <Panel tabs={["CHARACTER", "PARAGRAPH"]} on="CHARACTER" last>
                <CharBody>
                  <CharRow><Pick w={117} label="Font family" value="Bookman Old Style" /><Pick w={74} label="Font style" value="Bold" /></CharRow>
                  <Line $m="4px 0 3px" />
                  <CharGrid>
                    <TIcon kind="size" /><Combo w={74} label="Font size" value="11 pt" />
                    <TIcon kind="lead" /><Combo w={74} label="Leading" value="10.91 pt" />
                    <TIcon kind="kern" /><Combo w={74} off label="Kerning" value="" />
                    <TIcon kind="track" /><Combo w={74} label="Tracking" value="0" />
                  </CharGrid>
                  <Line $m="3px 0" />
                  <CharGrid>
                    <TIcon kind="vs" /><Field $w={56} $h={18} aria-label="Vertical scale" defaultValue="100%" />
                    <TIcon kind="hs" /><Field $w={56} $h={18} aria-label="Horizontal scale" defaultValue="100%" />
                    <TIcon kind="base" /><Field $w={56} $h={18} aria-label="Baseline shift" defaultValue="0 pt" />
                    <ColorLabel id={`${uid}c`}>Color:</ColorLabel><InkChip aria-labelledby={`${uid}c`} />
                  </CharGrid>
                  <Line $m="3px 0 0" />
                  <StyleRow>
                    <StyleBtn $s="font-weight:700;">T</StyleBtn><StyleBtn $s="font-style:italic;">T</StyleBtn>
                    <StyleBtn $w={38} $s="padding-left:6px;">TT</StyleBtn><StyleBtn>T<small>T</small></StyleBtn>
                    <StyleBtn>T<sup>1</sup></StyleBtn><StyleBtn>T<sub>1</sub></StyleBtn>
                    <StyleBtn $w={38} $s="padding-left:16px;text-decoration:underline;">T</StyleBtn><StyleBtn $s="text-decoration:line-through;">T</StyleBtn>
                  </StyleRow>
                  <Line $m="0 0 3px" />
                  <CharRow $l={2} $h={22} $gap={8}>
                    <Pick w={105} h={22} pad={3} label="Language" value="English: USA" />
                    <Ic w={14} h={14}><text x="0" y="7" fontSize="11" fontFamily={SERIF}>a</text><text x="7" y="12" fontSize="11" fontFamily={SERIF}>a</text></Ic>
                    <Pick w={68} h={22} pad={3} label="Anti-aliasing" value="None" />
                  </CharRow>
                </CharBody>
              </Panel>
            </Dock>

            <Dock $w={224}>
              <DarkHead><Fast /></DarkHead>
              <Panel tabs={["COLOR", "SWATCHES", "STYLES"]} on="SWATCHES" flex="317 1 0">
                <Body>
                  <Col><Swatches>{SW.map((c, i) => <Swatch key={i} $c={`#${c}`} aria-label={`#${c}`} />)}</Swatches></Col>
                  <ScrollV w={15} />
                </Body>
                <Line $m="0 17px 0 2px" />
                <Foot $gap={13} $h={16} $r={2}><IconSet><NewIc /><Trash /></IconSet><Grip /></Foot>
              </Panel>

              <Panel tabs={["ADJUSTMENTS", "MASKS"]} on="ADJUSTMENTS">
                <svg width="0" height="0" aria-hidden="true">
                  <defs>
                    <Grad id="gDark" from="#555" to="#111" /><Grad id="gBW" from="#111" to="#fff" /><Grad id="gWB" from="#fff" to="#000" />
                    <radialGradient id="gMid" cx=".5" cy=".4" r=".6"><stop offset="0" stopColor="#fff" /><stop offset="1" stopColor="#444" /></radialGradient>
                  </defs>
                </svg>
                <AdjWrap>
                  <AdjTitle>Add an adjustment</AdjTitle>
                  <Line />
                  {ADJ.map((row, r) => (
                    <React.Fragment key={r}>
                      {r > 0 && <Line $w={120} $m="9px auto 0" />}
                      <AdjLine>
                        {row.map(([n, d]) => <AdjButton key={n} aria-label={n}><Ic w={24} h={20}>{d}</Ic></AdjButton>)}
                      </AdjLine>
                    </React.Fragment>
                  ))}
                  <Presets>
                    <PresetList>
                      {PRESETS.map((p) => (
                        <Preset key={p}><Ic w={7} h={12}><path d="M1 1L6 5.500L1 10Z" fill="#aab0f0" stroke="#000" /></Ic>{p} Presets</Preset>
                      ))}
                    </PresetList>
                    <ScrollV w={14} />
                  </Presets>
                  <Line />
                  <AdjFoot>
                    <Ic w={16} h={13}><path d="M.5 .5H12.500V8M8 10.500H.5V.5" fill="none" stroke="#222" /><path d="M3 3H7M3 3V7M3 3L8 8" stroke="#222" strokeWidth="1.300" /><rect x="9.500" y="7.500" width="6" height="5" fill="#fff" stroke="#222" /></Ic>
                    <Ic w={20} h={13}><circle cx="14" cy="7" r="5" fill="#555" stroke="#eee" /><circle cx="10" cy="7" r="5.500" fill="#444" stroke="#eee" /><circle cx="6" cy="6.500" r="6" fill="#333" /><path d="M3 3A4 4 0 0 1 10 4" stroke="#ccc" fill="none" /></Ic>
                  </AdjFoot>
                </AdjWrap>
              </Panel>

              <Panel tabs={["LAYERS", "CHANNELS", "PATHS"]} on="LAYERS" flex="316 1 0" last>
                <LayerOpts $h={24}>
                  <Pick w={117} h={19} pad={3} label="Blend mode" value="Normal" />
                  <Label htmlFor={`${uid}o`} $c="#2a2a50">Opacity:</Label><Stepper id={`${uid}o`} value="100%" />
                </LayerOpts>
                <Line $m="0 2px" />
                <LayerOpts $h={24}>
                  <LockSet>Lock:
                    <Ic s={12}><rect x=".5" y=".5" width="11" height="11" fill="#fff" stroke="#555" /><path d="M2 2H6V6H2ZM6 6H10V10H6Z" fill="#ccc" /></Ic>
                    <Ic w={13} h={13}><path d="M0 12Q2 7 5 7L7 9Q5 12 0 12Z" fill="#333" /><path d="M6 7.500L12 1" stroke="#333" strokeWidth="1.700" /></Ic>
                    <Ic s={12}><path d="M6 1V11M1 6H11" stroke="#222" /><path d="M6 0L8 3H4ZM6 12L4 9H8ZM0 6L3 4V8ZM12 6L9 8V4Z" fill="#222" /></Ic>
                    <Ic w={12} h={12}><path d="M3.500 6V4Q3.500 1 6 1Q8.500 1 8.500 4V6" fill="none" stroke="#222" strokeWidth="1.500" /><rect x="1.500" y="5" width="9" height="6" rx="1" fill="#222" /></Ic>
                  </LockSet>
                  <Label $gap={3}>Fill: <Stepper value="100%" /></Label>
                </LayerOpts>
                <Body>
                  <Col>
                    <LayerRow>
                      <EyeCell><WellBox><Ic w={13} h={10}><path d="M0 6Q6 0 13 5Q7 12 0 6Z" fill="#ddd" stroke="#111" strokeWidth="1.300" /><circle cx="6.500" cy="5.500" r="2.800" /><circle cx="6" cy="5" r=".8" fill="#fff" /></Ic></WellBox></EyeCell>
                      <LayerName><Thumb $sel><Board width={28} title="Layer thumbnail" /></Thumb>Layer 0</LayerName>
                    </LayerRow>
                  </Col>
                  <ScrollV w={15} />
                </Body>
                <Line $m="0 17px 0 2px" />
                <Foot $gap={14} $h={17} $r={24}>
                  <Ic w={18} h={8}><path d="M6 1.500H3A2.500 2.500 0 0 0 3 6.500H6M11 1.500H14A2.500 2.500 0 0 1 14 6.500H11M4 4H13" fill="none" stroke="#777" strokeWidth="1.500" /></Ic>
                  <Ic w={16} h={13}><text x="0" y="10" fontFamily={SERIF} fontStyle="italic" fontWeight="700" fontSize="11" fill="#333">fx</text><path d="M13 11H16L14.500 13Z" /></Ic>
                  <Ic w={13} h={12}><rect x=".5" y=".5" width="12" height="11" fill="#888" stroke="#222" /><circle cx="6.500" cy="6" r="3" fill="#fff" /></Ic>
                  <Ic w={15} h={12}><circle cx="6" cy="6" r="5.500" fill="#eee" stroke="#444" /><path d="M2 10A5.500 5.500 0 0 1 10 2Z" fill="#333" /><path d="M12 10H15L13.500 12Z" /></Ic>
                  <Ic w={11} h={9}><path d="M.5 1.500H4L5 2.500H10.500V8.500H.5Z" fill="#eee" stroke="#333" /></Ic>
                  <NewIc /><Trash />
                </Foot>
              </Panel>
            </Dock>
          </Work>
        </Frame>
      </Shell>
    </>
  );
}
